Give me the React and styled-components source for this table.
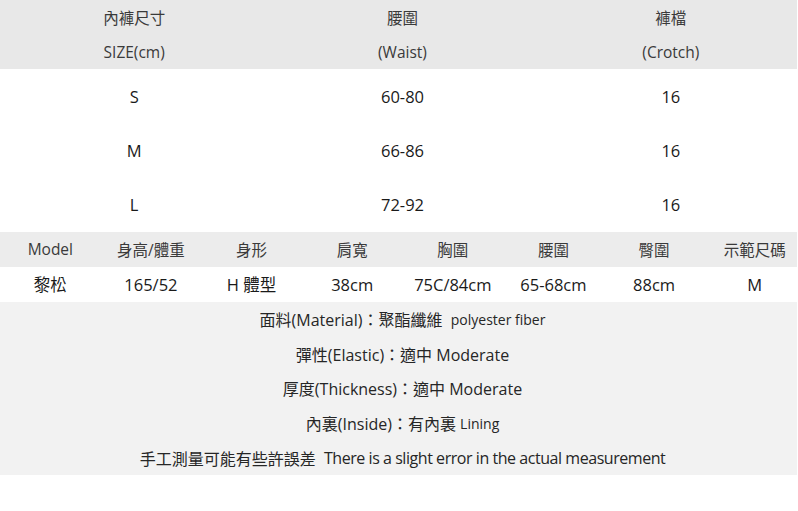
import React from 'react';
import styled, { createGlobalStyle } from 'styled-components';

const Global = createGlobalStyle`
  body {
    margin: 0;
    background: #fff;
    font-family: "Open Sans", "Noto Sans CJK TC", sans-serif;
    color: #222;
  }
`;

const Frame = styled.div`
  width: 797px;
  overflow: hidden;
`;

const Page = styled.div`
  width: 805px;
`;

const SizeTable = styled.div`
  display: grid;
  grid-template-columns: repeat(3, 1fr);
`;

const Cell = styled.div`
  display: flex;
  align-items: center;
  justify-content: center;
  height: ${p => p.$h}px;
  background: ${p => p.$bg || 'transparent'};
  font-size: ${p => p.$head ? '15.5px' : '16.5px'};
  color: ${p => p.$head ? '#3a3a3a' : '#1a1a1a'};
  white-space: nowrap;
`;

const ModelTable = styled.div`
  display: grid;
  grid-template-columns: repeat(8, 1fr);
`;

const Notes = styled.div`
  background: #f2f2f2;
  display: flex;
  flex-direction: column;
`;

const Note = styled.div`
  height: 34.6px;
  display: flex;
  align-items: center;
  justify-content: center;
  font-size: 16px;
  color: #262626;
  white-space: nowrap;
`;

const Small = styled.span`
  font-size: 14px;
`;

const Narrow = styled.span`
  letter-spacing: -0.45px;
`;

const sizeHead = [
  ['內褲尺寸', '腰圍', '褲檔'],
  ['SIZE(cm)', '(Waist)', '(Crotch)'],
];
const sizeRows = [
  ['S', '60-80', '16'],
  ['M', '66-86', '16'],
  ['L', '72-92', '16'],
];
const modelHead = ['Model', '身高/體重', '身形', '肩寬', '胸圍', '腰圍', '臀圍', '示範尺碼'];
const modelRow = ['黎松', '165/52', 'H 體型', '38cm', '75C/84cm', '65-68cm', '88cm', 'M'];

export default function App() {
  return (
    <Frame>
      <Global />
      <Page>
        <SizeTable>
          {sizeHead.map((row, i) =>
            row.map((t, j) => (
              <Cell key={`h${i}${j}`} $h={34.5} $bg="#e8e8e8" $head>{t}</Cell>
            ))
          )}
          {sizeRows.map((row, i) =>
            row.map((t, j) => (
              <Cell key={`r${i}${j}`} $h={54.33}>{t}</Cell>
            ))
          )}
        </SizeTable>
        <ModelTable>
          {modelHead.map(t => (
            <Cell key={t} $h={35} $bg="#ececec" $head>{t}</Cell>
          ))}
          {modelRow.map(t => (
            <Cell key={t} $h={35}>{t}</Cell>
          ))}
        </ModelTable>
        <Notes>
          <Note>面料(Material)：聚酯纖維&nbsp;&nbsp;<Small>polyester fiber</Small></Note>
          <Note>彈性(Elastic)：適中 Moderate</Note>
          <Note>厚度(Thickness)：適中 Moderate</Note>
          <Note>內裏(Inside)：有內裏&nbsp;<Small>Lining</Small></Note>
          <Note>手工測量可能有些許誤差&nbsp;&nbsp;<Narrow>There is a slight error in the actual measurement</Narrow></Note>
        </Notes>
      </Page>
    </Frame>
  );
}
